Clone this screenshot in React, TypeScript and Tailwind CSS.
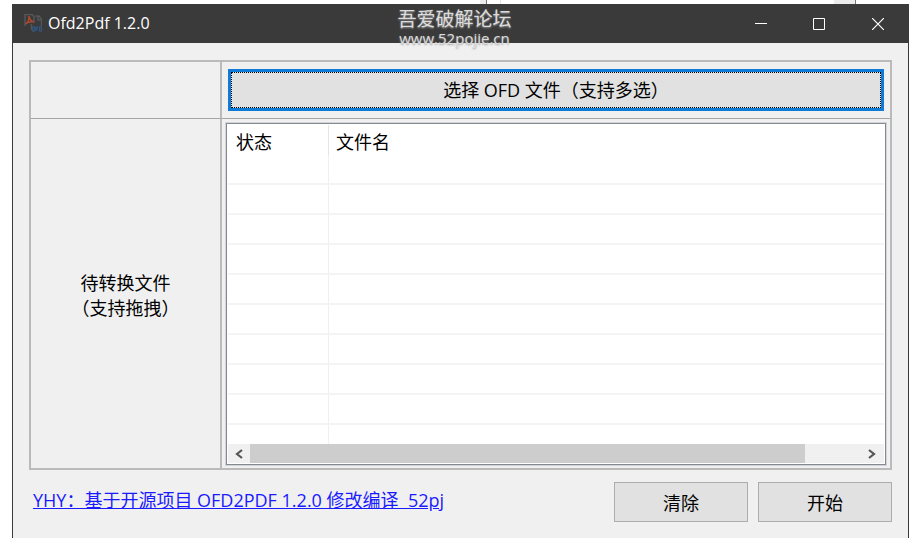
import React from "react";

const rows = Array.from({ length: 10 }, (_, i) => i);

function AppIcon() {
  return (
    <svg width="18" height="18" viewBox="0 0 18 18" fill="none" aria-hidden="true">
      <path d="M1 12V.5h7l2 2V9" stroke="#55565a" strokeWidth="1.500" />
      <path d="M11 2h4l2.500 3v7" stroke="#55565a" strokeWidth="1.500" />
      <path d="M7.500 10v6M14 2v4h3" stroke="#55565a" strokeWidth="1.500" />
      <path d="M1.500 10c2-1 3.500-4 3.500-8 .5 3 2 5.500 5 6-3-.5-6 0-8.500 2z" stroke="#a5492f" strokeWidth="1.600" />
      <path d="M8.500 13v4h2v-4zM12 13v4M12 13h2M12 15h2M15.500 13v4h2v-4z" stroke="#33547c" strokeWidth="1.300" />
    </svg>
  );
}

function TitleBar() {
  return (
    <header className="grid h-[39px] shrink-0 grid-cols-[1fr_auto_1fr] items-start bg-[#3a3a3a] text-white">
      <div className="flex h-[38px] items-center gap-1.5 pl-[11px]">
        <AppIcon />
        <h1 className="text-[16px] leading-5">Ofd2Pdf 1.2.0</h1>
      </div>
      <div className="-ml-3 flex h-[39px] flex-col items-center pt-1 text-[#dcdcdc] [text-shadow:0_1px_2px_#999]">
        <span className="text-[19px] leading-[22px]">吾爱破解论坛</span>
        <span className="text-[15px] leading-4">www.52pojie.cn</span>
      </div>
      <div className="flex h-full justify-end">
        <button type="button" aria-label="最小化" className="flex w-[58px] items-center justify-center">
          <svg width="12" height="12" viewBox="0 0 12 12"><path d="M0 5.500h12" stroke="#fff" /></svg>
        </button>
        <button type="button" aria-label="最大化" className="flex w-[58px] items-center justify-center">
          <svg width="12" height="12" viewBox="0 0 12 12"><path d="M.5.500h11v11H.5z" fill="none" stroke="#fff" /></svg>
        </button>
        <button type="button" aria-label="关闭" className="flex w-[60px] items-center justify-center">
          <svg width="12" height="12" viewBox="0 0 12 12"><path d="M0 0l12 12M12 0L0 12" stroke="#fff" strokeWidth="1.200" /></svg>
        </button>
      </div>
    </header>
  );
}

function FileList() {
  return (
    <div className="flex min-h-0 flex-1 flex-col border border-[#858a92] bg-white p-px ring-1 ring-[#d2d4d7]">
      <div className="min-h-0 flex-1 overflow-hidden">
        <table className="w-full table-fixed border-separate border-spacing-0 text-left">
          <thead>
            <tr className="h-[30px]">
              <th className="w-[101px] border-r border-[#e5e5e5] p-0 pt-1 pl-2 font-normal leading-6">状态</th>
              <th className="p-0 pt-1 pl-[7px] font-normal leading-6">文件名</th>
            </tr>
          </thead>
          <tbody>
            {rows.map((r) => (
              <tr key={r} className="h-[30px]">
                <td className="border-r border-b-2 border-r-[#f0f0f0] border-b-[#f4f4f4] p-0" />
                <td className="border-b-2 border-[#f4f4f4] p-0" />
              </tr>
            ))}
          </tbody>
        </table>
      </div>
      <div className="flex h-[19px] shrink-0 bg-[#f0f0f0]">
        <button type="button" aria-label="向左滚动" className="flex w-[22px] items-center justify-center">
          <svg width="8" height="10" viewBox="0 0 8 10"><path d="M7 1L2 5l5 4" fill="none" stroke="#555" strokeWidth="2.200" /></svg>
        </button>
        <div className="flex-1">
          <div className="h-full w-[91%] bg-[#cdcdcd]" />
        </div>
        <button type="button" aria-label="向右滚动" className="flex w-[24px] items-center justify-center">
          <svg width="8" height="10" viewBox="0 0 8 10"><path d="M1 1l5 4-5 4" fill="none" stroke="#555" strokeWidth="2.200" /></svg>
        </button>
      </div>
    </div>
  );
}

export default function App() {
  return (
    <div className="flex h-screen flex-col overflow-hidden bg-white font-['Open_Sans','Noto_Sans_CJK_SC',sans-serif] text-[18px] text-black">
      <div className="flex h-1 shrink-0">
        <div className="w-[480px]" />
        <div className="w-[7px] border-r border-[#777] bg-[#ececec]" />
        <div className="w-[14px] border-r border-[#e4e4e4]" />
        <div className="flex-1" />
        <div className="w-[22px] border-r border-[#777] bg-[#ececec]" />
        <div className="w-[55px]" />
      </div>
      <div className="mr-[2px] ml-3 flex min-h-0 flex-1 flex-col border-x border-[#3a3a3a] bg-[#f0f0f0]">
        <TitleBar />
        <main className="flex min-h-0 flex-1 flex-col px-4 pt-[17px] pb-4">
          <section className="grid min-h-0 flex-1 grid-cols-[191px_1fr] grid-rows-[57px_1fr] border-2 border-[#bababa]">
            <div className="border-r-2 border-b border-r-[#bababa] border-b-[#a5a5a5]" />
            <div className="flex border-b border-[#a5a5a5] px-[6px] py-[7px]">
              <button
                type="button"
                className="flex flex-1 items-center justify-center border-[3px] border-[#0f7bd7] bg-[#e1e1e1] outline-1 -outline-offset-4 outline-dotted outline-black"
              >
                选择 OFD 文件（支持多选）
              </button>
            </div>
            <div className="flex flex-col items-center justify-center border-r-2 border-[#bababa] pt-1 leading-[25px]">
              <span>待转换文件</span>
              <span>（支持拖拽）</span>
            </div>
            <div className="flex min-h-0 flex-col px-1 pt-1 pb-[3px]">
              <FileList />
            </div>
          </section>
          <footer className="flex items-start justify-between pt-3">
            <a href="#project" className="ml-1 pt-1 leading-7 whitespace-pre text-[#1a1aff] underline">
              {"YHY：基于开源项目 OFD2PDF 1.2.0 修改编译  52pj"}
            </a>
            <div className="flex gap-[10px]">
              <button type="button" className="h-10 w-[134px] border border-[#adadad] bg-[#e1e1e1] pt-[2px]">
                清除
              </button>
              <button type="button" className="h-10 w-[134px] border border-[#adadad] bg-[#e1e1e1] pt-[2px]">
                开始
              </button>
            </div>
          </footer>
        </main>
      </div>
    </div>
  );
}
